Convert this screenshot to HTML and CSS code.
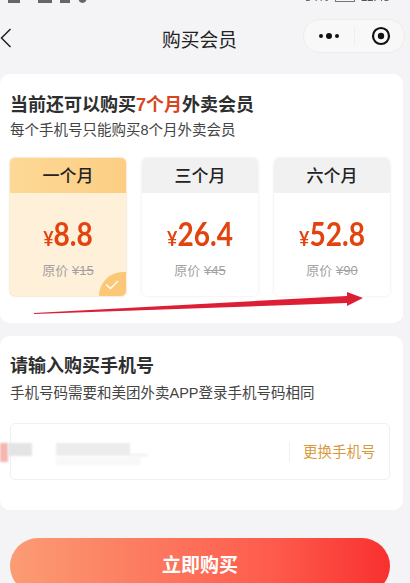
FILE: index.html
```html
<!DOCTYPE html>
<html lang="en">
<head>
    <meta charset="UTF-8">
    <title>购买会员</title>
    <link rel="stylesheet" href="styles.css">
</head>
<body>
    <div class="page">
        <div class="status-bar">
            <div class="status-left">
                <span class="status-blob s1"></span>
                <span class="status-blob s2"></span>
                <span class="status-blob s3"></span>
                <span class="status-blob s4"></span>
            </div>
            <div class="status-right">
                <span class="status-text">84%</span>
                <span class="status-battery"></span>
                <span class="status-text">11:48</span>
            </div>
        </div>

        <div class="nav-bar">
            <svg class="back-icon" width="12" height="20" viewBox="0 0 12 20"><path d="M10.5 1 L1.5 10 L10.5 19" fill="none" stroke="#222" stroke-width="1.5"/></svg>
            <div class="nav-title">购买会员</div>
            <div class="capsule">
                <div class="capsule-half">
                    <span class="dot small"></span><span class="dot"></span><span class="dot small"></span>
                </div>
                <div class="capsule-line"></div>
                <div class="capsule-half">
                    <svg class="capsule-target" width="20" height="20" viewBox="0 0 20 20"><circle cx="10" cy="10" r="8" fill="none" stroke="#111" stroke-width="2.2"/><circle cx="10" cy="10" r="3.2" fill="#111"/></svg>
                </div>
            </div>
        </div>

        <div class="card plans-card">
            <h2 class="card-title">当前还可以购买<span class="highlight">7个月</span>外卖会员</h2>
            <p class="card-sub">每个手机号只能购买8个月外卖会员</p>
            <div class="plans">
                <div class="plan selected">
                    <div class="plan-head">一个月</div>
                    <div class="plan-price"><span class="yen">¥</span>8.8</div>
                    <div class="plan-old">原价 <s>¥15</s></div>
                    <div class="plan-check">
                        <svg width="14" height="10" viewBox="0 0 14 10"><path d="M1 4.5 L5.5 8.5 L13 1" fill="none" stroke="#fff" stroke-width="1.3"/></svg>
                    </div>
                </div>
                <div class="plan">
                    <div class="plan-head">三个月</div>
                    <div class="plan-price"><span class="yen">¥</span>26.4</div>
                    <div class="plan-old">原价 <s>¥45</s></div>
                </div>
                <div class="plan">
                    <div class="plan-head">六个月</div>
                    <div class="plan-price"><span class="yen">¥</span>52.8</div>
                    <div class="plan-old">原价 <s>¥90</s></div>
                </div>
            </div>
            <!-- red arrow scribbled over the screenshot -->
            <svg class="arrow" width="330" height="28" viewBox="0 0 330 28"><path d="M0 25 L313 8 L313 4 L329 10 L313 18 L313 15 L0 26 Z" fill="#dc1f35"/></svg>
        </div>

        <div class="card phone-card">
            <h2 class="card-title">请输入购买手机号</h2>
            <p class="card-sub phone-sub">手机号码需要和美团外卖APP登录手机号码相同</p>
            <div class="phone-box">
                <div class="phone-blur">
                    <span class="blur-red"></span>
                    <span class="blur-a"></span>
                    <span class="blur-b"></span>
                    <span class="blur-c"></span>
                    <span class="blur-d"></span>
                </div>
                <div class="phone-change">更换手机号</div>
            </div>
        </div>

        <div class="buy-button">立即购买</div>
    </div>
</body>
</html>
```

FILE: styles.css
```css
* {
    box-sizing: border-box;
}
html, body {
    margin: 0;
    padding: 0;
}
body {
    width: 410px;
    height: 583px;
    overflow: hidden;
    background: #f4f4f6;
    font-family: "Liberation Sans", "Noto Sans CJK SC", sans-serif;
    color: #2b2b2b;
}
.page {
    height: 583px;
    overflow: hidden;
}
.status-bar {
    height: 18px;
    margin-top: -12px;
    padding: 0 20px 0 8px;
    display: flex;
    justify-content: space-between;
    align-items: center;
    filter: blur(0.6px);
}
.status-left {
    display: flex;
    gap: 8px;
}
.status-blob {
    display: block;
    height: 12px;
    background: #666;
}
.s1 { width: 12px; }
.s2 { width: 14px; margin-left: 10px; }
.s3 { width: 10px; }
.s4 { width: 9px; border-radius: 50%; }
.status-right {
    display: flex;
    align-items: center;
    gap: 6px;
    color: #555;
}
.status-text {
    font-size: 12px;
}
.status-battery {
    width: 20px;
    height: 10px;
    border: 1px solid #777;
}
.nav-bar {
    height: 52px;
    margin-top: 6px;
    position: relative;
    display: flex;
    align-items: center;
    justify-content: center;
}
.back-icon {
    position: absolute;
    left: 0;
    top: 16px;
}
.nav-title {
    font-size: 18.75px;
    color: #222;
    margin-right: 11px;
}
.capsule {
    position: absolute;
    right: 5px;
    top: 7px;
    width: 102px;
    height: 34px;
    border: 1px solid #ececec;
    border-radius: 17px;
    background: #f8f8f9;
    display: flex;
    align-items: center;
}
.capsule-half {
    flex: 1;
    display: flex;
    align-items: center;
    justify-content: center;
    gap: 3px;
}
.capsule-target {
    margin-left: 3px;
}
.capsule-line {
    width: 1px;
    height: 18px;
    background: #efefef;
}
.dot {
    width: 6px;
    height: 6px;
    border-radius: 50%;
    background: #111;
}
.dot.small {
    width: 4px;
    height: 4px;
}
.card {
    background: #fff;
    border-radius: 10px;
    margin-right: 7px;
}
.plans-card {
    position: relative;
    height: 249px;
    margin-top: 10px;
    padding: 19px 10px 0;
}
.phone-card {
    height: 174px;
    margin-top: 13px;
    padding: 18px 10px 0;
}
.card-title {
    margin: 0;
    font-size: 18px;
    line-height: 24px;
    font-weight: 700;
    color: #2e2e2e;
}
.highlight {
    color: #d9451f;
}
.card-sub {
    margin: 3px 0 0;
    font-size: 14.5px;
    line-height: 20px;
    color: #444;
}
.phone-sub {
    margin-top: 5px;
}
.plans {
    display: flex;
    gap: 16px;
    margin-top: 18px;
}
.plan {
    position: relative;
    width: 116px;
    height: 138px;
    border-radius: 5px;
    overflow: hidden;
    background: #fff;
    box-shadow: 0 0 3px rgba(0, 0, 0, 0.1);
    text-align: center;
}
.plan-head {
    height: 35px;
    background: #f1f1f1;
    font-size: 17px;
    font-weight: 500;
    line-height: 38px;
    color: #222;
}
.plan-price {
    margin-top: 24px;
    font-size: 33px;
    line-height: 32px;
    font-weight: 700;
    color: #e2430f;
    font-family: "Lato", "Liberation Sans", sans-serif;
    transform: scaleX(0.85);
}
.yen {
    font-size: 21px;
}
.plan-old {
    margin-top: 8px;
    font-size: 13px;
    line-height: 18px;
    color: #a2a2a2;
}
.plan.selected {
    background: #fff0d9;
    box-shadow: 0 0 2px #e0bd85;
}
.plan.selected .plan-head {
    background: linear-gradient(90deg, #fdd896, #fcce84);
}
.plan-check {
    position: absolute;
    right: 0;
    bottom: 0;
    width: 27px;
    height: 24px;
    padding: 8px 0 0 6px;
    background: #fbc877;
    border-top-left-radius: 24px;
    text-align: left;
    line-height: 0;
}
.arrow {
    position: absolute;
    left: 34px;
    top: 214px;
}
.phone-box {
    height: 57px;
    margin-top: 20px;
    border: 1px solid #f0f0f0;
    border-radius: 5px;
    margin-right: 3px;
    display: flex;
    align-items: center;
    justify-content: space-between;
}
.phone-blur {
    position: relative;
    width: 150px;
    height: 30px;
}
.phone-blur span {
    position: absolute;
    display: block;
    filter: blur(1px);
}
.blur-red {
    left: -11px;
    top: 6px;
    width: 8px;
    height: 19px;
    background: #f5b5b0;
}
.blur-a {
    left: -3px;
    top: 6px;
    width: 24px;
    height: 13px;
    background: #e4e4e4;
}
.blur-b {
    left: 45px;
    top: 6px;
    width: 74px;
    height: 13px;
    background: #ececec;
}
.blur-c {
    left: 45px;
    top: 20px;
    width: 85px;
    height: 8px;
    background: #f8f8f8;
}
.blur-d {
    left: 119px;
    top: 17px;
    width: 18px;
    height: 2px;
    background: #eeeeee;
}
.phone-change {
    width: 100px;
    height: 20px;
    border-left: 1px solid #f0f0f0;
    padding-left: 13px;
    font-size: 14.5px;
    line-height: 20px;
    color: #d99a3e;
}
.buy-button {
    width: 380px;
    height: 56px;
    margin: 28px 0 0 10px;
    border-radius: 28px;
    background: linear-gradient(90deg, #fb9c74, #fe5a4c 70%, #f8302f);
    color: #fff;
    font-size: 19px;
    font-weight: 700;
    text-align: center;
    line-height: 56px;
}
```
